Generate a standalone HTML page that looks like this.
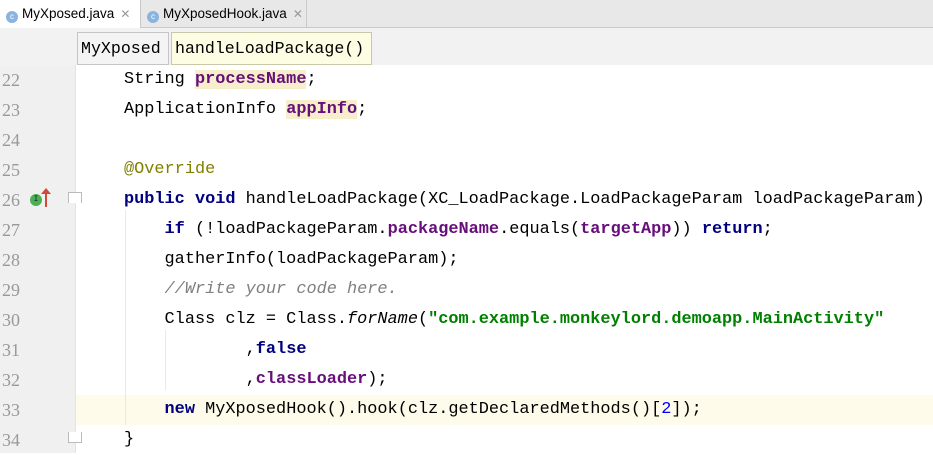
<!DOCTYPE html><html><head><style>
body{margin:0;width:933px;height:453px;overflow:hidden;background:#fff;position:relative;font-family:"Liberation Mono",monospace}
.tabs{position:absolute;left:0;top:0;width:933px;height:27px;background:#e8e8e8;border-bottom:1px solid #c9c9c9}
.tab{position:absolute;top:0;height:27px;font:13.5px "Liberation Sans",sans-serif;line-height:27px;color:#000}
.ci{display:inline-block;width:12px;height:12px;border-radius:50%;background:#8ab4e0;color:#fff;font-size:8px;line-height:12px;text-align:center;vertical-align:-1px;margin-right:4px}
.x{color:#999;margin-left:6px;font-size:12px}
.bc{position:absolute;top:28px;left:0;width:933px;height:37px;background:#f2f2f2}
.crumb{position:absolute;top:4px;height:31px;border:1px solid #c5c5c5;font-size:16.6px;line-height:31px;padding:0 3px;color:#000}
.gut{position:absolute;left:0;top:65px;width:75px;height:388px;background:#f0f0f0;border-right:1px solid #e3e3e3}
.ln{position:absolute;left:2px;width:30px;font:18px "Liberation Serif",serif;color:#999;height:30px;line-height:30px}
.l{position:absolute;left:124px;height:30px;line-height:30px;font-size:16.9px;white-space:pre;color:#000}
.k{color:#000080;font-weight:bold}.f{color:#660e7a;font-weight:bold}.s{color:#008000;font-weight:bold}
.hl{background:#f7efcb}.c{color:#808080;font-style:italic}.a{color:#808000}.n{color:#0000ff}
</style></head><body>
<div class="tabs">
<div class="tab" style="left:0;width:134px;background:#fff;padding-left:6px;height:28px;border-right:1px solid #c9c9c9"><span class="ci">c</span>MyXposed.java<span class="x">✕</span></div>
<div class="tab" style="left:141px;width:159px;padding-left:6px;border-right:1px solid #c9c9c9"><span class="ci">c</span>MyXposedHook.java<span class="x">✕</span></div>
</div>
<div class="bc">
<div class="crumb" style="left:77px;width:84px;background:#f4f4f4">MyXposed</div>
<div class="crumb" style="left:171px;width:193px;background:#fdfde4;border-color:#c8c8a8">handleLoadPackage()</div>
</div>
<div style="position:absolute;left:76px;top:395px;width:857px;height:30px;background:#fefbea"></div>
<div class="gut"></div>
<div class="ln" style="top:65px">22</div><div class="ln" style="top:95px">23</div><div class="ln" style="top:125px">24</div><div class="ln" style="top:155px">25</div><div class="ln" style="top:185px">26</div><div class="ln" style="top:215px">27</div><div class="ln" style="top:245px">28</div><div class="ln" style="top:275px">29</div><div class="ln" style="top:305px">30</div><div class="ln" style="top:335px">31</div><div class="ln" style="top:365px">32</div><div class="ln" style="top:395px">33</div><div class="ln" style="top:425px">34</div>
<div style="position:absolute;left:30px;top:194px;width:12px;height:12px;border-radius:50%;background:#4caf50;color:#124;font-size:8px;line-height:12px;text-align:center">I</div>
<div style="position:absolute;left:45px;top:190px;width:2px;height:17px;background:#d04a3a"></div>
<div style="position:absolute;left:41px;top:188px;width:0;height:0;border:5px solid transparent;border-bottom:6px solid #d04a3a;border-top:0"></div>
<div style="position:absolute;left:68px;top:192px;width:12px;height:10px;border:1px solid #bbb;border-bottom:none;background:#fff"></div>
<div style="position:absolute;left:68px;top:432px;width:12px;height:10px;border:1px solid #bbb;border-top:none;background:#fff"></div>
<div style="position:absolute;left:125px;top:210px;width:1px;height:215px;background:#e8e8e8"></div>
<div style="position:absolute;left:165px;top:330px;width:1px;height:60px;background:#e8e8e8"></div>
<div class="l" style="top:65px">String <span class="f hl">processName</span>;</div>
<div class="l" style="top:95px">ApplicationInfo <span class="f hl">appInfo</span>;</div>
<div class="l a" style="top:155px">@Override</div>
<div class="l" style="top:185px"><span class="k">public void</span> handleLoadPackage(XC_LoadPackage.LoadPackageParam loadPackageParam)</div>
<div class="l" style="top:215px">    <span class="k">if</span> (!loadPackageParam.<span class="f">packageName</span>.equals(<span class="f">targetApp</span>)) <span class="k">return</span>;</div>
<div class="l" style="top:245px">    gatherInfo(loadPackageParam);</div>
<div class="l c" style="top:275px">    //Write your code here.</div>
<div class="l" style="top:305px">    Class clz = Class.<i>forName</i>(<span class="s">"com.example.monkeylord.demoapp.MainActivity"</span></div>
<div class="l" style="top:335px">            ,<span class="k">false</span></div>
<div class="l" style="top:365px">            ,<span class="f">classLoader</span>);</div>
<div class="l" style="top:395px">    <span class="k">new</span> MyXposedHook().hook(clz.getDeclaredMethods()[<span class="n">2</span>]);</div>
<div class="l" style="top:425px">}</div>
</body></html>
